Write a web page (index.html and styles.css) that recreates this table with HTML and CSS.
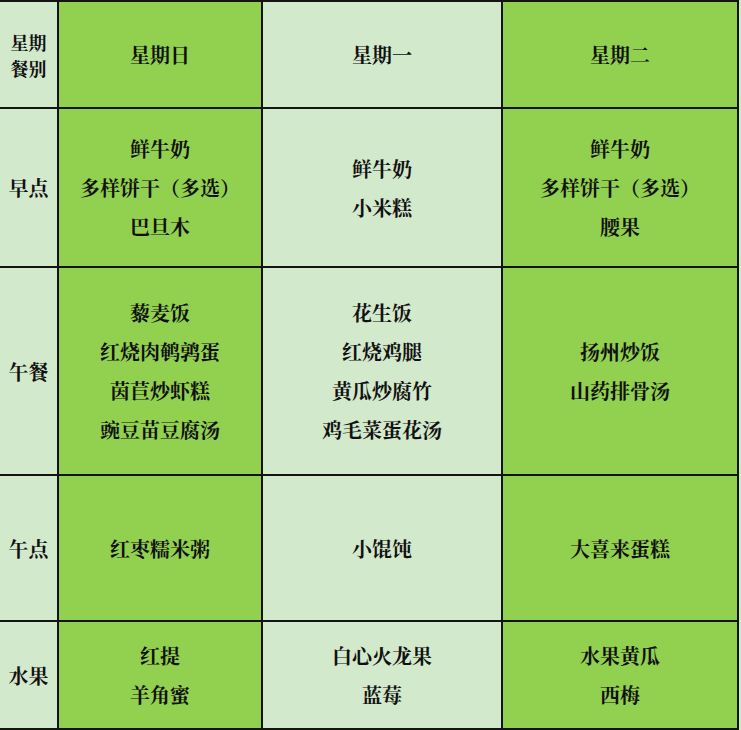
FILE: index.html
```html
<!DOCTYPE html>
<html lang="zh-CN">
<head>
<meta charset="utf-8">
<title>食谱</title>
<link rel="stylesheet" href="styles.css">
</head>
<body>
<div class="menu">
  <div class="cell side head-side"><span>星期</span><span>餐别</span></div>
  <div class="cell bright"><span>星期日</span></div>
  <div class="cell light"><span>星期一</span></div>
  <div class="cell bright"><span>星期二</span></div>

  <div class="cell side"><span>早点</span></div>
  <div class="cell bright"><span>鲜牛奶</span><span>多样饼干（多选）</span><span>巴旦木</span></div>
  <div class="cell light"><span>鲜牛奶</span><span>小米糕</span></div>
  <div class="cell bright"><span>鲜牛奶</span><span>多样饼干（多选）</span><span>腰果</span></div>

  <div class="cell side"><span>午餐</span></div>
  <div class="cell bright"><span>藜麦饭</span><span>红烧肉鹌鹑蛋</span><span>茵苣炒虾糕</span><span>豌豆苗豆腐汤</span></div>
  <div class="cell light"><span>花生饭</span><span>红烧鸡腿</span><span>黄瓜炒腐竹</span><span>鸡毛菜蛋花汤</span></div>
  <div class="cell bright"><span>扬州炒饭</span><span>山药排骨汤</span></div>

  <div class="cell side"><span>午点</span></div>
  <div class="cell bright"><span>红枣糯米粥</span></div>
  <div class="cell light"><span>小馄饨</span></div>
  <div class="cell bright"><span>大喜来蛋糕</span></div>

  <div class="cell side"><span>水果</span></div>
  <div class="cell bright"><span>红提</span><span>羊角蜜</span></div>
  <div class="cell light"><span>白心火龙果</span><span>蓝莓</span></div>
  <div class="cell bright"><span>水果黄瓜</span><span>西梅</span></div>
</div>
</body>
</html>
```

FILE: styles.css
```css
html, body {
  margin: 0;
  padding: 0;
  background: #d3e9cc;
}

body {
  width: 741px;
  height: 730px;
  overflow: hidden;
  font-family: "Noto Serif CJK SC", "Noto Sans CJK SC", serif;
  color: #111111;
}

.menu {
  display: grid;
  grid-template-columns: 57px 202px 238px 234px;
  grid-template-rows: 105px 157px 206px 144px 106px;
  gap: 2px;
  background: #141414;
  border-top: 2px solid #141414;
  border-right: 2px solid #141414;
  border-bottom: 2px solid #141414;
  width: 737px;
}

.cell {
  display: flex;
  flex-direction: column;
  align-items: center;
  justify-content: center;
  font-size: 20px;
  line-height: 39px;
  font-weight: 700;
  white-space: nowrap;
}

.bright {
  background: #92d050;
}

.light {
  background: #d3e9cc;
}

.side {
  background: #d3e9cc;
}

.head-side {
  font-size: 18px;
  line-height: 26px;
}
```
